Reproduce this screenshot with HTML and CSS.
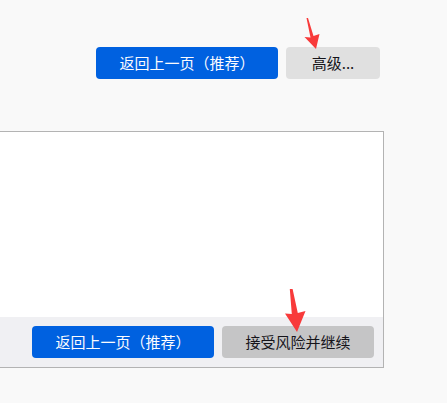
FILE: index.html
```html
<!DOCTYPE html>
<html lang="zh-CN">
<head>
<meta charset="utf-8">
<link rel="stylesheet" href="styles.css">
</head>
<body>
<div class="page">
  <div class="top-actions">
    <button class="btn btn-primary btn-wide">返回上一页（推荐）</button>
    <button class="btn btn-secondary btn-advanced">高级...</button>
  </div>
  <div class="frame-wrap">
    <div class="frame">
      <div class="frame-body"></div>
      <div class="frame-footer">
        <button class="btn btn-primary btn-wide">返回上一页（推荐）</button>
        <button class="btn btn-dark btn-accept">接受风险并继续</button>
      </div>
    </div>
  </div>
</div>
<svg class="arrows" width="447" height="403" viewBox="0 0 447 403">
  <polygon points="306.5,18 308,18 313.5,36 319.5,34 316,49 304.5,37 310.5,37.5" fill="#f83a3a"/>
  <polygon points="289.8,289 292.6,289 297.8,313 305.5,311 297,332 285,313.5 291.8,314" fill="#f83a3a"/>
</svg>
</body>
</html>
```
FILE: styles.css
```css
html, body {
  margin: 0;
  padding: 0;
}
body {
  width: 447px;
  height: 403px;
  overflow: hidden;
  background: #f9f9f9;
  font-family: "Noto Sans CJK SC", "Noto Sans", sans-serif;
  position: relative;
}
.page {
  padding-top: 47px;
}
.top-actions {
  display: flex;
  justify-content: flex-end;
  gap: 8px;
  padding-right: 67px;
}
.btn {
  height: 32px;
  border: none;
  border-radius: 4px;
  font-family: "Noto Sans CJK SC", "Noto Sans", sans-serif;
  font-size: 15px;
  line-height: 32px;
  padding: 0;
  margin: 0;
  text-align: center;
  white-space: nowrap;
  flex-shrink: 0;
}
.btn-primary {
  background: #0061e0;
  color: #fbfbfe;
}
.btn-secondary {
  background: #e0e0e0;
  color: #15141a;
}
.btn-dark {
  background: #c5c5c6;
  color: #15141a;
}
.btn-wide {
  width: 182px;
}
.btn-advanced {
  width: 94px;
}
.btn-accept {
  width: 152px;
}
.frame-wrap {
  margin-top: 52px;
  display: flex;
  justify-content: flex-end;
  padding-right: 63px;
}
.frame {
  width: 520px;
  flex-shrink: 0;
  border: 1px solid #b3b3b3;
  background: #ffffff;
}
.frame-body {
  height: 185px;
  background: #ffffff;
}
.frame-footer {
  height: 50px;
  box-sizing: border-box;
  background: #f0f0f3;
  padding: 9px 9px 9px 0;
  display: flex;
  justify-content: flex-end;
  gap: 8px;
}
.arrows {
  position: absolute;
  left: 0;
  top: 0;
  pointer-events: none;
}
```
